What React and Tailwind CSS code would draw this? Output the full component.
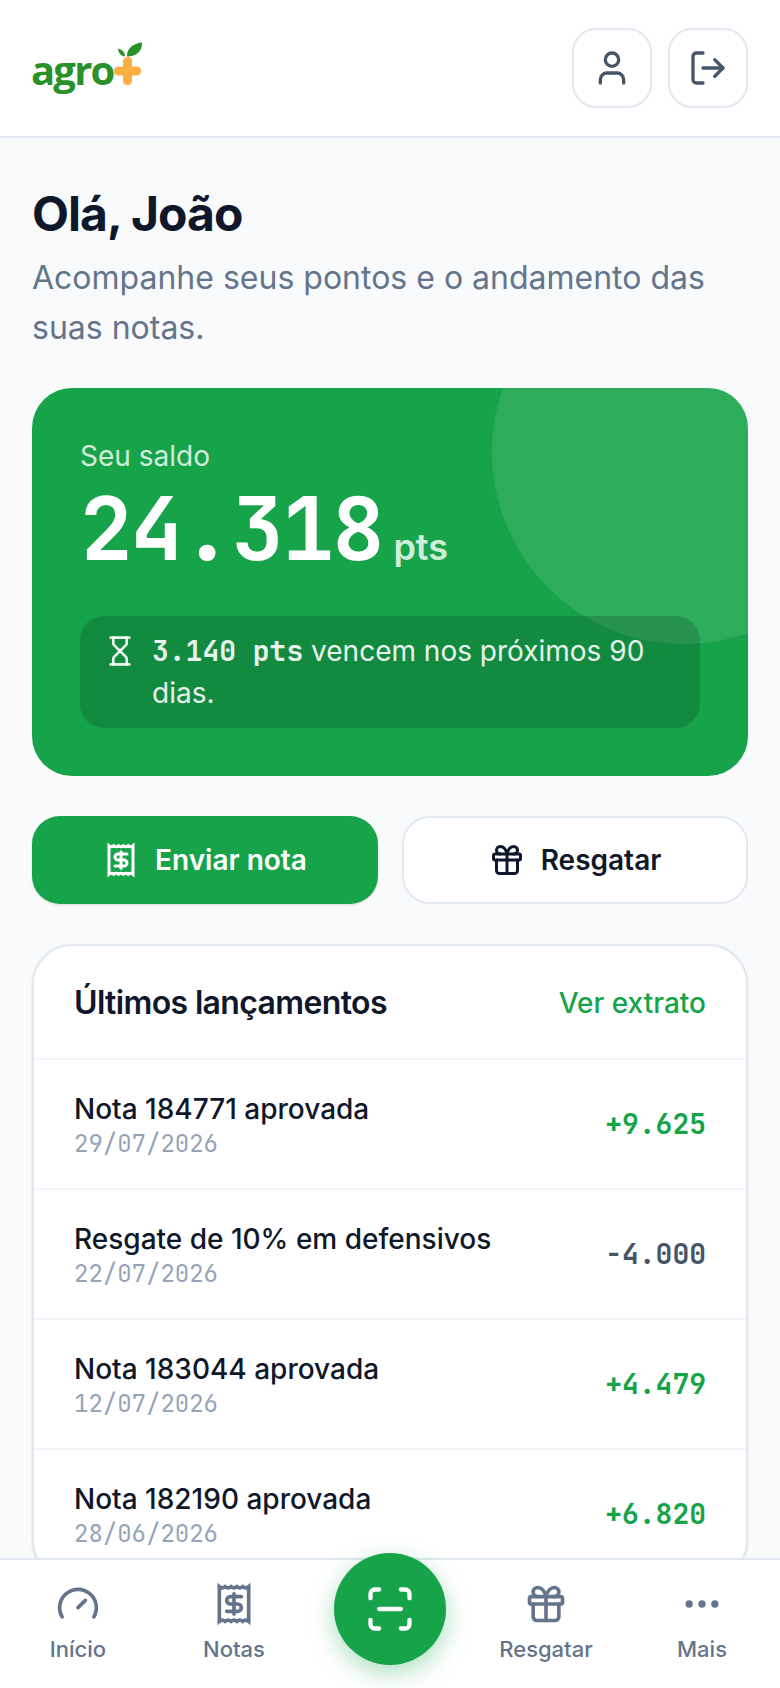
import React from 'react';
import { User, LogOut, Hourglass, Gift, Gauge, Ellipsis, ScanLine } from 'lucide-react';

const mono = "font-['JetBrains_Mono','DejaVu_Sans_Mono',monospace]";

// lucide's receipt has deeper teeth than the one in the design
const ReceiptIcon = ({ size = 24, className = '' }) => (
    <svg width={size} height={size} viewBox="0 0 24 24" fill="none" stroke="currentColor" strokeWidth="2" strokeLinecap="round" strokeLinejoin="miter" className={className}>
        <path d="M4 2.500V21.500q1.600-1.300 3.200 0q1.600-1.300 3.200 0q1.600-1.300 3.200 0q1.600-1.300 3.200 0q1.600-1.300 3.200 0V2.500q-1.600 1.300-3.200 0q-1.600 1.300-3.200 0q-1.600 1.300-3.200 0q-1.600 1.300-3.200 0q-1.600 1.300-3.200 0Z" />
        <path d="M16 8h-6a2 2 0 1 0 0 4h4a2 2 0 1 1 0 4H8" strokeLinejoin="round" />
        <path d="M12 17.500v-11" />
    </svg>
);

const Logo = () => (
    <div className="flex items-start h-[52px] -ml-[1px]">
        <span className="font-['Open_Sans',sans-serif] font-bold text-[40px] leading-[52px] tracking-[-1.8px] text-[#2a9128] mt-[2px]">agro</span>
        <svg width="30" height="52" viewBox="0 0 30 52" className="-mt-[2px] -ml-[1px]">
            <path d="M15 17c-3 0-5 1.500-5 4v5.500H5c-2.500 0-4 2-4 4.500s1.500 4.500 4 4.500h5V41c0 2.500 1.500 4 4.500 4s4.500-1.500 4.500-4v-5.500h5c2.500 0 4-2 4-4.500s-1.500-4.500-4-4.500h-5V21c0-2.500-1-4-4-4Z" fill="#fdb03f" />
            <path d="M14 16.500c-.5-7 5-13 15-14 .5 8-5 14-15 14Z" fill="#2a9128" />
            <path d="M12 16.500c-4-.5-6.500-3-7-8 4 1 7 3.500 7 8Z" fill="#2a9128" />
        </svg>
    </div>
);

const rows = [
    { title: 'Nota 184771 aprovada', date: '29/07/2026', amount: '+9.625', color: 'text-[#16a34a]' },
    { title: 'Resgate de 10% em defensivos', date: '22/07/2026', amount: '-4.000', color: 'text-[#475569]' },
    { title: 'Nota 183044 aprovada', date: '12/07/2026', amount: '+4.479', color: 'text-[#16a34a]' },
    { title: 'Nota 182190 aprovada', date: '28/06/2026', amount: '+6.820', color: 'text-[#16a34a]' },
];

const NavItem = ({ icon: Icon, label }) => (
    <div className="flex flex-col items-center gap-2 w-[156px] -mt-[2px]">
        <Icon size={44} className="text-[#64748b]" />
        <span className="text-[22px] leading-[30px] font-medium text-[#64748b]">{label}</span>
    </div>
);

export default function App() {
    return (
        <div className="relative flex flex-col h-[1688px] w-[780px] overflow-hidden bg-[#f8fafc] font-['Inter',sans-serif]">
            <header className="flex items-center justify-between h-[138px] shrink-0 px-8 bg-white border-b-2 border-[#e2e8f0]">
                <Logo />
                <div className="flex gap-4">
                    <button className="flex items-center justify-center w-20 h-20 rounded-3xl border-2 border-[#e2e8f0] bg-white text-[#475569]">
                        <User size={40} />
                    </button>
                    <button className="flex items-center justify-center w-20 h-20 rounded-3xl border-2 border-[#e2e8f0] bg-white text-[#475569]">
                        <LogOut size={40} />
                    </button>
                </div>
            </header>

            <main className="flex-1 min-h-0 overflow-hidden px-8 pt-10">
                <h1 className="text-[48px] leading-[72px] font-bold tracking-[-0.96px] text-[#0f172a]">Olá, João</h1>
                <p className="text-[32px] leading-[50px] text-[#64748b] mt-[3px]">Acompanhe seus pontos e o andamento das suas notas.</p>

                <section className="relative overflow-hidden mt-[35px] rounded-[40px] bg-[#16a34a] p-12">
                    <div className="absolute -top-32 -right-32 w-96 h-96 rounded-full bg-white/10" />
                    <div className="relative text-[28px] leading-[40px] text-white/80">Seu saldo</div>
                    <div className="relative flex items-baseline gap-[11px] mt-1 text-white">
                        <span className={`${mono} text-[88px] leading-[96px] font-bold tracking-[-2.4px]`}>24.318</span>
                        <span className="text-[36px] leading-[48px] font-semibold text-white/80">pts</span>
                    </div>
                    <div className="relative flex gap-4 mt-10 rounded-3xl bg-black/15 px-6 py-[14px] text-[28px] leading-[42px] text-white/90">
                        <Hourglass size={32} className="shrink-0 mt-[5px]" />
                        <p><span className={`${mono} font-bold`}>3.140 pts</span> vencem nos próximos 90 dias.</p>
                    </div>
                </section>

                <div className="grid grid-cols-2 gap-6 mt-10">
                    <button className="flex items-center justify-center gap-4 h-[88px] rounded-[28px] bg-[#16a34a] text-white text-[28px] font-semibold shadow-sm">
                        <ReceiptIcon size={36} />
                        Enviar nota
                    </button>
                    <button className="flex items-center justify-center gap-4 h-[88px] rounded-[28px] bg-white border-2 border-[#e2e8f0] text-[#0f172a] text-[28px] font-semibold">
                        <Gift size={36} />
                        Resgatar
                    </button>
                </div>

                <section className="mt-10 rounded-[40px] bg-white border-2 border-[#e2e8f0] overflow-hidden shadow-sm">
                    <div className="flex items-center justify-between h-[112px] pt-[2px] px-10">
                        <h2 className="text-[32px] font-semibold tracking-[-0.64px] text-[#0f172a]">Últimos lançamentos</h2>
                        <a className="text-[28px] font-medium text-[#16a34a]">Ver extrato</a>
                    </div>
                    {rows.map(row => (
                        <div key={row.date} className="flex items-center justify-between h-[130px] px-10 border-t-2 border-[#f1f5f9]">
                            <div className="pt-1">
                                <div className="text-[28px] leading-[36px] font-medium text-[#0f172a]">{row.title}</div>
                                <div className={`${mono} text-[24px] leading-[34px] text-[#94a3b8]`}>{row.date}</div>
                            </div>
                            <div className={`${mono} text-[28px] font-bold ${row.color}`}>{row.amount}</div>
                        </div>
                    ))}
                </section>
            </main>

            <nav className="relative flex items-center justify-between h-[130px] shrink-0 bg-white border-t-2 border-[#e2e8f0]">
                <NavItem icon={Gauge} label="Início" />
                <NavItem icon={ReceiptIcon} label="Notas" />
                <div className="w-[156px]" />
                <NavItem icon={Gift} label="Resgatar" />
                <NavItem icon={Ellipsis} label="Mais" />
                <button className="absolute left-[334px] -top-[7px] flex items-center justify-center w-28 h-28 rounded-full bg-[#16a34a] text-white shadow-[0_8px_24px_rgba(22,163,74,0.35)]">
                    <ScanLine size={52} />
                </button>
            </nav>
        </div>
    );
}
